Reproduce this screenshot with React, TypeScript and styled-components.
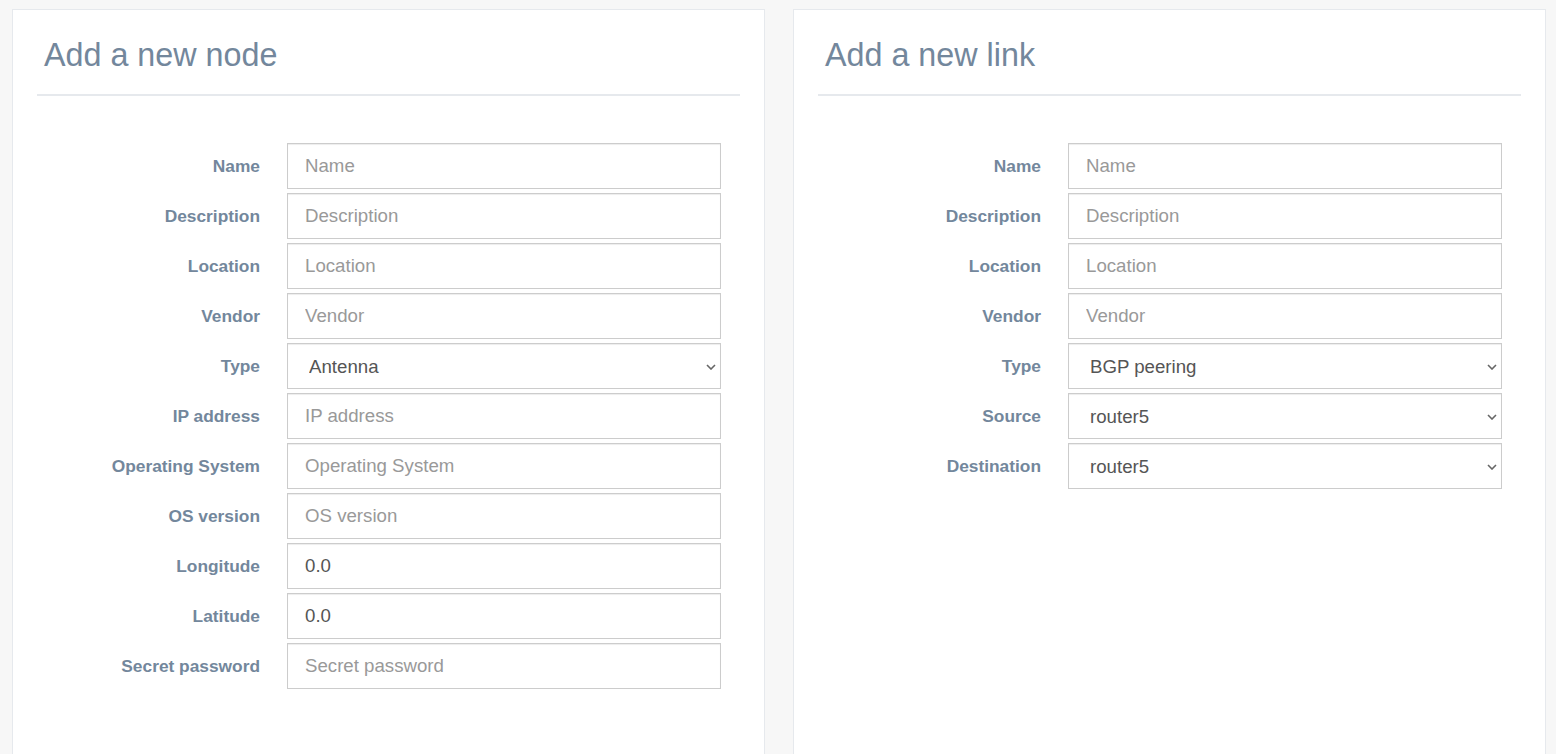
import React from "react";
import styled, { createGlobalStyle } from "styled-components";

const GlobalStyle = createGlobalStyle`
  html, body {
    margin: 0;
    padding: 0;
    background: #F7F7F7;
    font-family: "Liberation Sans", Arial, sans-serif;
    overflow: hidden;
  }
  * { box-sizing: border-box; }
`;

const Page = styled.div`
  display: grid;
  grid-template-columns: 1fr 1fr;
  column-gap: 28px;
  padding: 9px 10px 0 12px;
  height: 754px;
`;

const Panel = styled.section`
  background: #fff;
  border: 1px solid #E6E9ED;
  padding: 0 24px;
  height: 800px;
`;

const TitleBar = styled.div`
  padding: 27px 7px 21px;
  border-bottom: 2px solid #E6E9ED;
`;

const Title = styled.h2`
  margin: 0;
  font-size: 32.3px;
  line-height: 36px;
  font-weight: 400;
  color: #73879C;
`;

const Form = styled.form`
  display: grid;
  grid-template-columns: 223px 434px;
  grid-auto-rows: 46px;
  column-gap: 27px;
  row-gap: 4px;
  padding-top: 47px;
`;

const Label = styled.label`
  display: flex;
  align-items: center;
  justify-content: flex-end;
  font-size: 17.33px;
  font-weight: 700;
  color: #73879C;
  white-space: nowrap;
`;

const fieldBase = `
  width: 100%;
  height: 46px;
  border: 1px solid #ccc;
  border-radius: 0;
  background: #fff;
  box-shadow: inset 0 1px 1px rgba(0,0,0,0.075);
  font-family: "Liberation Sans", Arial, sans-serif;
  font-size: 18.67px;
  color: #555;
  padding: 0 17px;
  outline: none;
`;

const TextInput = styled.input`
  ${fieldBase}
  &::placeholder {
    color: #999;
    opacity: 1;
  }
`;

const SelectWrap = styled.div`
  position: relative;
  height: 46px;
`;

const Select = styled.select`
  ${fieldBase}
  appearance: none;
  -webkit-appearance: none;
  padding: 0 24px 0 21px;
`;

const Chevron = styled.svg`
  position: absolute;
  right: 5px;
  top: 50%;
  width: 10px;
  height: 6px;
  margin-top: -2px;
  pointer-events: none;
`;

type Field =
  | { label: string; kind: "text"; placeholder: string; value?: string }
  | { label: string; kind: "select"; options: string[] };

const nodeFields: Field[] = [
  { label: "Name", kind: "text", placeholder: "Name" },
  { label: "Description", kind: "text", placeholder: "Description" },
  { label: "Location", kind: "text", placeholder: "Location" },
  { label: "Vendor", kind: "text", placeholder: "Vendor" },
  { label: "Type", kind: "select", options: ["Antenna", "Router", "Switch", "Firewall"] },
  { label: "IP address", kind: "text", placeholder: "IP address" },
  { label: "Operating System", kind: "text", placeholder: "Operating System" },
  { label: "OS version", kind: "text", placeholder: "OS version" },
  { label: "Longitude", kind: "text", placeholder: "Longitude", value: "0.0" },
  { label: "Latitude", kind: "text", placeholder: "Latitude", value: "0.0" },
  { label: "Secret password", kind: "text", placeholder: "Secret password" },
];

const linkFields: Field[] = [
  { label: "Name", kind: "text", placeholder: "Name" },
  { label: "Description", kind: "text", placeholder: "Description" },
  { label: "Location", kind: "text", placeholder: "Location" },
  { label: "Vendor", kind: "text", placeholder: "Vendor" },
  { label: "Type", kind: "select", options: ["BGP peering", "Ethernet link", "Optical link"] },
  { label: "Source", kind: "select", options: ["router5", "router1", "router2"] },
  { label: "Destination", kind: "select", options: ["router5", "router1", "router2"] },
];

function FormPanel({ title, fields }: { title: string; fields: Field[] }) {
  return (
    <Panel>
      <TitleBar>
        <Title>{title}</Title>
      </TitleBar>
      <Form onSubmit={(e) => e.preventDefault()}>
        {fields.map((f) => (
          <React.Fragment key={f.label}>
            <Label>{f.label}</Label>
            {f.kind === "text" ? (
              <TextInput
                type={f.label === "Secret password" ? "password" : "text"}
                placeholder={f.placeholder}
                defaultValue={f.value}
              />
            ) : (
              <SelectWrap>
                <Select defaultValue={f.options[0]}>
                  {f.options.map((o) => (
                    <option key={o}>{o}</option>
                  ))}
                </Select>
                <Chevron viewBox="0 0 10 6" aria-hidden="true">
                  <path d="M1 1 L5 5 L9 1" fill="none" stroke="#666" strokeWidth="1.6" />
                </Chevron>
              </SelectWrap>
            )}
          </React.Fragment>
        ))}
      </Form>
    </Panel>
  );
}

export default function App() {
  return (
    <>
      <GlobalStyle />
      <Page>
        <FormPanel title="Add a new node" fields={nodeFields} />
        <FormPanel title="Add a new link" fields={linkFields} />
      </Page>
    </>
  );
}
